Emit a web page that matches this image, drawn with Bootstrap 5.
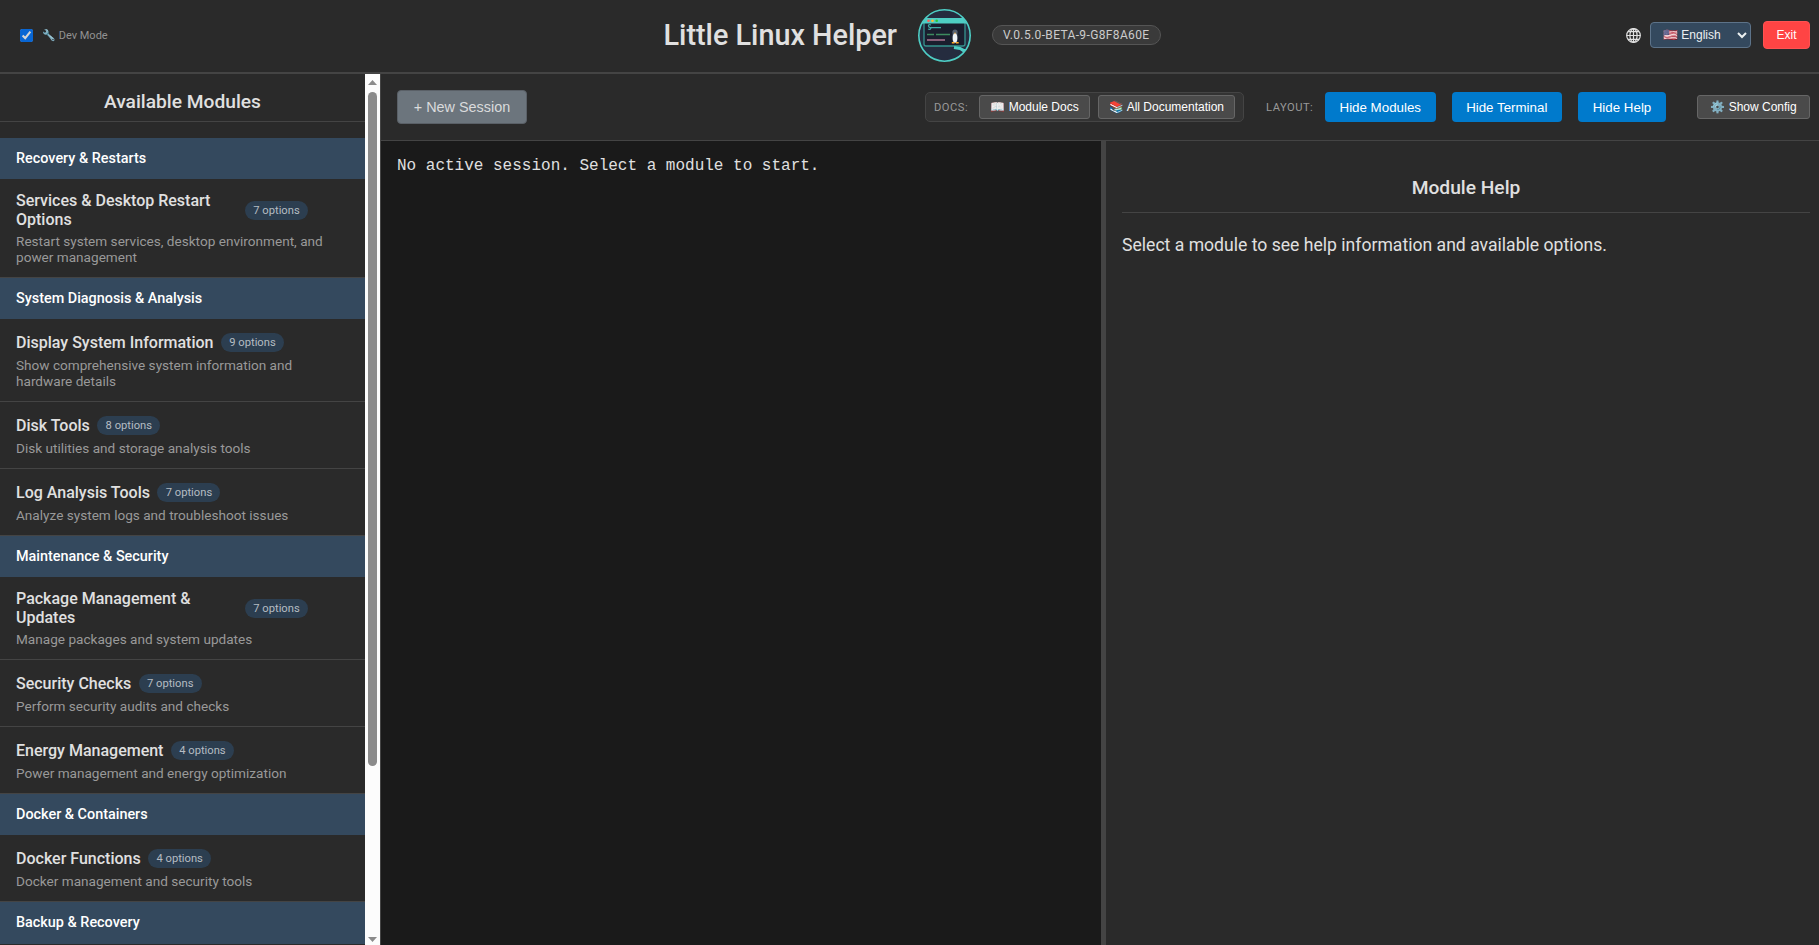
<!DOCTYPE html>
<html lang="en">
<head>
<meta charset="utf-8">
<title>Little Linux Helper</title>
<link href="https://cdn.jsdelivr.net/npm/bootstrap@5.3.0/dist/css/bootstrap.min.css" rel="stylesheet">
<style>
body{background:#1a1a1a;color:#e0e0e0;font-family:Roboto,sans-serif;font-size:16px;line-height:normal}
h1,h2,h3{line-height:normal;margin:0}
button,select{font-family:"Liberation Sans",Arial,sans-serif;line-height:normal}
.topbar{height:74px;background:#2a2a2a;border-bottom:2px solid #444;padding:0 9px 2px 0}
.top-left{width:663.500px;padding-left:20px;font-size:11px;color:#929292}
.top-left input{width:13px;height:13px;margin:0 9px 0 0;opacity:.8}
.app-title{font-size:28.8px;font-weight:500}
.logo{width:53px;height:53px;margin-left:21px;margin-right:21px}
.version{width:169px;height:20px;border:1px solid #555;border-radius:10px;background:#3a3a3a;font-size:12px;letter-spacing:.36px;color:#ccc;padding:0 10px}
.lang{width:101px;height:26px;background:#34495e;color:#ecf0f1;border:1px solid #5d7389;border-radius:4px;font-size:12px;padding:4px 8px;margin:0 12px 0 9px}
.exit-btn{width:47px;height:28px;background:#f44;color:#fff;border:1px solid #ff5252;border-radius:4px;font-size:12px;padding:0;line-height:1}
.side{width:381px;background:#2a2a2a;border-right:1px solid #444}
.side-title{font-size:19.2px;font-weight:500;padding:16px 0 8px;border-bottom:1px solid #444;margin-bottom:16px}
.cat{height:41px;flex:none;background:#34495e;color:#fff;font-size:14.4px;font-weight:500;padding:0 16px}
.cat:last-child{height:42px;padding-bottom:1px}
.mod{flex:none;padding:12px 16px;border-bottom:1px solid #444}
.mod-head{max-width:292px;min-height:22px;margin-bottom:4px;font-weight:500}
.opt{background:#2c3e50;color:#b5bcc2;font-size:11.2px;font-weight:400;height:19px;border-radius:10px;margin-left:7.500px;width:63px;flex:none}
.desc{font-size:13.6px;color:#999}
.sbar{width:15px;background:#fcfcfc;padding:6px 0 3px}
.thumb{width:9px;height:674px;border-radius:5px;background:#8b8b8b;margin-top:7px}
.tools{height:67px;background:#2a2a2a;border-bottom:1px solid #444;padding:0 9px 0 16px}
.new-btn{width:130px;height:34px;background:#6c757d;border:1px solid #5a6067;border-radius:4px;color:#dadbdc;font-size:14.4px;padding:0}
.docs{width:319px;height:30px;border:1px solid #444;border-radius:5px;background:#333;padding:0 8px}
.tag{font-size:11.2px;letter-spacing:.5px;color:#999}
.gray-btn{height:24px;background:#4a4a4a;border:1px solid #666;border-radius:3px;color:#fff;font-size:12px;padding:0;white-space:nowrap}
.module-docs{width:111px}
.all-docs{width:137px}
.lay{width:59px;margin-left:22px}
.conf{width:113px;margin-left:31px}
.blue-btn{height:30px;background:#007acc;border:0;border-radius:4px;color:#fff;font-size:13.333px;padding:0;width:110.500px}
.blue-btn.hide-help{width:88px}
.term{width:720px;background:#1a1a1a;padding:16px;font-family:"Liberation Mono",monospace}
.divider{width:5px;background:#444}
.help{background:#2a2a2a;padding:35px 9px 0 16px}
.help h2{font-size:19.2px;font-weight:500;padding-bottom:13px;border-bottom:1px solid #444}
.help p{font-size:17.6px;margin:22px 0 0}
</style>
</head>
<body class="vh-100 overflow-hidden d-flex flex-column">
<header class="topbar d-flex align-items-center flex-shrink-0">
  <div class="top-left d-flex align-items-center flex-shrink-0"><input type="checkbox" checked id="dev"><label for="dev">🔧 Dev Mode</label></div>
  <h1 class="app-title text-nowrap">Little Linux Helper</h1>
  <svg class="logo flex-shrink-0" viewBox="0 0 53 53">
    <defs><clipPath id="disc"><circle cx="26.5" cy="26.5" r="25.5"/></clipPath></defs>
    <circle cx="26.5" cy="26.5" r="25.7" fill="#252c3f"/>
    <g clip-path="url(#disc)">
      <rect x="6" y="10" width="41" height="27" rx="2" fill="#1a1e2e" stroke="#35948f" stroke-width="1.3"/>
      <path d="M3 9h47v5.500H3z" fill="#4ecdc4"/>
      <path d="M36 38.500l6 1 4 2 6 0M43 40l6 4" stroke="#4ecdc4" stroke-width="3" fill="none"/>
    </g>
    <circle cx="10.500" cy="11.800" r="1.300" fill="#ff5f56"/><circle cx="14.500" cy="11.800" r="1.300" fill="#ffbd2e"/><circle cx="18.700" cy="11.800" r="1.300" fill="#27c93f"/>
    <path d="M13 16q-3-1-2.500 1t2.500 1.500q0 2.500-3 1.500M13 18.700h10" stroke="#3fa9a3" stroke-width="1.200" fill="none"/>
    <path d="M9 25.500h7M18 25.500h14" stroke="#3d8b5f" stroke-width="1.400"/>
    <path d="M9 31h18" stroke="#a8728f" stroke-width="1.600"/>
    <ellipse cx="37" cy="28" rx="3.200" ry="6.300" fill="#33394a"/><circle cx="37" cy="23" r="2.600" fill="#596273"/>
    <ellipse cx="37" cy="29" rx="2.300" ry="4.700" fill="#f2f5fa"/><path d="M36 23.800h2l-1 1.200z" fill="#ffa726"/>
    <path d="M33.800 33.800h2.700M38 33.800h2.700" stroke="#ffa726" stroke-width="1.500"/>
    <circle cx="26.500" cy="26.500" r="25.700" fill="none" stroke="#4ecdc4" stroke-width="1.600"/>
  </svg>
  <span class="version d-flex align-items-center text-nowrap">V.0.5.0-BETA-9-G8F8A60E</span>
  <div class="ms-auto d-flex align-items-center">
    <svg width="15" height="15" viewBox="0 0 15 15" fill="none" stroke="#e0e0e0" stroke-width="1.200"><circle cx="7.500" cy="7.500" r="6.800"/><ellipse cx="7.500" cy="7.500" rx="3.600" ry="6.800"/><path d="M7.500.5v14M.5 7.500h14M1.800 3.700h11.400M1.800 11.300h11.400"/></svg>
    <select class="lang"><option>🇺🇸 English</option></select>
    <button class="exit-btn">Exit</button>
  </div>
</header>
<div class="d-flex flex-grow-1 overflow-hidden">
  <aside class="side d-flex flex-shrink-0">
    <div class="flex-grow-1 overflow-hidden d-flex flex-column">
      <h2 class="side-title text-center">Available Modules</h2>
      <div class="cat d-flex align-items-center">Recovery &amp; Restarts</div>
      <div class="mod"><div class="mod-head d-flex align-items-center"><span class="flex-grow-1">Services &amp; Desktop Restart Options</span><span class="opt d-flex align-items-center justify-content-center">7 options</span></div><div class="desc">Restart system services, desktop environment, and power management</div></div>
      <div class="cat d-flex align-items-center">System Diagnosis &amp; Analysis</div>
      <div class="mod"><div class="mod-head d-flex align-items-center"><span>Display System Information</span><span class="opt d-flex align-items-center justify-content-center">9 options</span></div><div class="desc">Show comprehensive system information and hardware details</div></div>
      <div class="mod"><div class="mod-head d-flex align-items-center"><span>Disk Tools</span><span class="opt d-flex align-items-center justify-content-center">8 options</span></div><div class="desc">Disk utilities and storage analysis tools</div></div>
      <div class="mod"><div class="mod-head d-flex align-items-center"><span>Log Analysis Tools</span><span class="opt d-flex align-items-center justify-content-center">7 options</span></div><div class="desc">Analyze system logs and troubleshoot issues</div></div>
      <div class="cat d-flex align-items-center">Maintenance &amp; Security</div>
      <div class="mod"><div class="mod-head d-flex align-items-center"><span class="flex-grow-1">Package Management &amp; Updates</span><span class="opt d-flex align-items-center justify-content-center">7 options</span></div><div class="desc">Manage packages and system updates</div></div>
      <div class="mod"><div class="mod-head d-flex align-items-center"><span>Security Checks</span><span class="opt d-flex align-items-center justify-content-center">7 options</span></div><div class="desc">Perform security audits and checks</div></div>
      <div class="mod"><div class="mod-head d-flex align-items-center"><span>Energy Management</span><span class="opt d-flex align-items-center justify-content-center">4 options</span></div><div class="desc">Power management and energy optimization</div></div>
      <div class="cat d-flex align-items-center">Docker &amp; Containers</div>
      <div class="mod"><div class="mod-head d-flex align-items-center"><span>Docker Functions</span><span class="opt d-flex align-items-center justify-content-center">4 options</span></div><div class="desc">Docker management and security tools</div></div>
      <div class="cat d-flex align-items-center">Backup &amp; Recovery</div>
    </div>
    <div class="sbar d-flex flex-column align-items-center flex-shrink-0">
      <svg width="9" height="5"><path d="M0 5L4.500 0 9 5z" fill="#8b8b8b"/></svg>
      <div class="thumb"></div>
      <svg class="mt-auto" width="9" height="5"><path d="M0 0h9L4.500 5z" fill="#8b8b8b"/></svg>
    </div>
  </aside>
  <main class="flex-grow-1 d-flex flex-column overflow-hidden">
    <div class="tools d-flex align-items-center flex-shrink-0">
      <button class="new-btn">+ New Session</button>
      <div class="docs d-flex align-items-center ms-auto"><span class="tag me-auto">DOCS:</span><button class="gray-btn module-docs">📖 Module Docs</button><button class="gray-btn all-docs ms-2">📚 All Documentation</button></div>
      <span class="tag lay">LAYOUT:</span>
      <div class="d-flex gap-3"><button class="blue-btn">Hide Modules</button><button class="blue-btn">Hide Terminal</button><button class="blue-btn hide-help">Hide Help</button></div>
      <button class="gray-btn conf">⚙️ Show Config</button>
    </div>
    <div class="d-flex flex-grow-1">
      <div class="term flex-shrink-0">No active session. Select a module to start.</div>
      <div class="divider flex-shrink-0"></div>
      <section class="help flex-grow-1"><h2 class="text-center">Module Help</h2><p>Select a module to see help information and available options.</p></section>
    </div>
  </main>
</div>
<script src="https://cdn.jsdelivr.net/npm/bootstrap@5.3.0/dist/js/bootstrap.bundle.min.js"></script>
</body>
</html>
